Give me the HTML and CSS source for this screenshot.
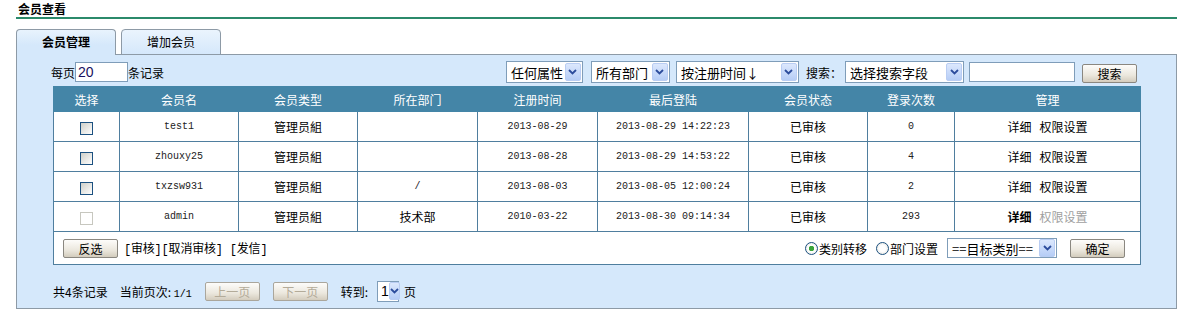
FILE: index.html
```html
<!DOCTYPE html>
<html lang="zh-CN">
<head>
  <meta charset="UTF-8">
  <title>会员查看</title>
  <link rel="stylesheet" href="styles.css">
</head>
<body>
  <div class="page">
    <div class="page-title">会员查看</div>

    <div class="tabs">
      <div class="tab tab-active">会员管理</div>
      <div class="tab">增加会员</div>
    </div>

    <div class="panel">
      <div class="toolbar">
        <div class="perpage">
          <span>每页</span><span class="textbox w-perpage">20</span><span>条记录</span>
        </div>
        <div class="filters">
          <div class="select w-attr"><span class="select-text">任何属性</span><span class="arrow"><svg width="9" height="6" viewBox="0 0 9 6"><path d="M1 1 L4.5 4.5 L8 1" fill="none" stroke="#2c4c9c" stroke-width="1.8"/></svg></span></div>
          <div class="select w-dept"><span class="select-text">所有部门</span><span class="arrow"><svg width="9" height="6" viewBox="0 0 9 6"><path d="M1 1 L4.5 4.5 L8 1" fill="none" stroke="#2c4c9c" stroke-width="1.8"/></svg></span></div>
          <div class="select w-order"><span class="select-text">按注册时间↓</span><span class="arrow"><svg width="9" height="6" viewBox="0 0 9 6"><path d="M1 1 L4.5 4.5 L8 1" fill="none" stroke="#2c4c9c" stroke-width="1.8"/></svg></span></div>
          <span class="label-search">搜索：</span>
          <div class="select w-field"><span class="select-text">选择搜索字段</span><span class="arrow"><svg width="9" height="6" viewBox="0 0 9 6"><path d="M1 1 L4.5 4.5 L8 1" fill="none" stroke="#2c4c9c" stroke-width="1.8"/></svg></span></div>
          <span class="textbox w-keyword"></span>
          <span class="btn w-btn">搜索</span>
        </div>
      </div>

      <table class="grid">
        <colgroup>
          <col style="width:66px"><col style="width:119px"><col style="width:119px"><col style="width:120px"><col style="width:120px"><col style="width:151px"><col style="width:119px"><col style="width:87px"><col>
        </colgroup>
        <thead>
          <tr>
            <th>选择</th><th>会员名</th><th>会员类型</th><th>所在部门</th><th>注册时间</th><th>最后登陆</th><th>会员状态</th><th>登录次数</th><th>管理</th>
          </tr>
        </thead>
        <tbody>
          <tr>
            <td><span class="check"></span></td>
            <td class="mono">test1</td>
            <td>管理员組</td>
            <td></td>
            <td class="mono">2013-08-29</td>
            <td class="mono">2013-08-29 14:22:23</td>
            <td>已审核</td>
            <td class="mono">0</td>
            <td><span class="link">详细</span><span class="link">权限设置</span></td>
          </tr>
          <tr>
            <td><span class="check"></span></td>
            <td class="mono">zhouxy25</td>
            <td>管理员組</td>
            <td></td>
            <td class="mono">2013-08-28</td>
            <td class="mono">2013-08-29 14:53:22</td>
            <td>已审核</td>
            <td class="mono">4</td>
            <td><span class="link">详细</span><span class="link">权限设置</span></td>
          </tr>
          <tr>
            <td><span class="check"></span></td>
            <td class="mono">txzsw931</td>
            <td>管理员組</td>
            <td class="mono">/</td>
            <td class="mono">2013-08-03</td>
            <td class="mono">2013-08-05 12:00:24</td>
            <td>已审核</td>
            <td class="mono">2</td>
            <td><span class="link">详细</span><span class="link">权限设置</span></td>
          </tr>
          <tr>
            <td><span class="check check-disabled"></span></td>
            <td class="mono">admin</td>
            <td>管理员組</td>
            <td>技术部</td>
            <td class="mono">2010-03-22</td>
            <td class="mono">2013-08-30 09:14:34</td>
            <td>已审核</td>
            <td class="mono">293</td>
            <td><span class="link link-strong">详细</span><span class="link link-disabled">权限设置</span></td>
          </tr>
          <tr class="actions-row">
            <td colspan="9">
              <div class="actions">
                <div class="actions-left">
                  <span class="btn w-btn">反选</span>
                  <span class="bulk">[审核][取消审核] [发信]</span>
                </div>
                <div class="actions-right">
                  <span class="radio radio-on"></span><span class="radio-label">类别转移</span>
                  <span class="radio"></span><span class="radio-label">部门设置</span>
                  <div class="select w-target"><span class="select-text">==目标类别==</span><span class="arrow"><svg width="9" height="6" viewBox="0 0 9 6"><path d="M1 1 L4.5 4.5 L8 1" fill="none" stroke="#2c4c9c" stroke-width="1.8"/></svg></span></div>
                  <span class="btn w-btn">确定</span>
                </div>
              </div>
            </td>
          </tr>
        </tbody>
      </table>

      <div class="pager">
        <span>共4条记录</span>
        <span class="pager-info">当前页次: <span class="mono-inline">1/1</span></span>
        <span class="btn btn-disabled w-btn">上一页</span>
        <span class="btn btn-disabled w-btn">下一页</span>
        <span>转到:</span>
        <div class="select w-page"><span class="select-text">1</span><span class="arrow"><svg width="9" height="6" viewBox="0 0 9 6"><path d="M1 1 L4.5 4.5 L8 1" fill="none" stroke="#2c4c9c" stroke-width="1.8"/></svg></span></div>
        <span>页</span>
      </div>
    </div>
  </div>
</body>
</html>
```

FILE: styles.css
```css
body {
  margin: 0;
  font-family: "Noto Sans CJK SC", "DejaVu Sans", sans-serif;
  font-size: 12px;
  color: #000;
  background: #fff;
}
.page {
  margin: 0 8px 0 16px;
}
.page-title {
  height: 17px;
  line-height: 17px;
  padding-left: 2px;
  font-weight: bold;
  border-bottom: 2px solid #2b8a6b;
}
.tabs {
  display: flex;
  gap: 5px;
  margin-top: 10px;
  height: 25px;
  position: relative;
  z-index: 1;
}
.tab {
  width: 98px;
  height: 24px;
  line-height: 24px;
  text-align: center;
  border: 1px solid #8d9aa6;
  border-radius: 4px 4px 0 0;
  background: linear-gradient(#eaf4fd, #d5e8fb);
}
.tab-active {
  font-weight: bold;
  height: 25px;
  border-bottom: none;
  background: linear-gradient(#e8f3fd, #d5e8fb 60%);
}
.panel {
  border: 1px solid #8d9aa6;
  background: #d5e8fb;
  padding: 5px 35px 7px 36px;
}
.toolbar {
  display: flex;
  justify-content: space-between;
  align-items: center;
  height: 24px;
  margin-left: -2px;
  padding-right: 4px;
}
.perpage {
  display: flex;
  align-items: center;
}
.filters {
  display: flex;
  align-items: center;
}
.textbox {
  display: inline-block;
  box-sizing: border-box;
  height: 20px;
  line-height: 18px;
  background: #fff;
  border: 1px solid #7f9db9;
  font-family: "Liberation Sans", sans-serif;
  font-size: 14px;
  color: #1a1060;
  padding-left: 2px;
}
.w-perpage { width: 53px; }
.w-keyword { width: 106px; margin-left: 5px; }
.select {
  display: flex;
  align-items: center;
  justify-content: space-between;
  box-sizing: border-box;
  height: 22px;
  background: #fff;
  border: 1px solid #7f9db9;
  padding: 1px;
  font-size: 13px;
}
.select-text {
  padding-left: 3px;
  white-space: nowrap;
}
.arrow {
  display: flex;
  align-items: center;
  justify-content: center;
  width: 16px;
  height: 18px;
  box-sizing: border-box;
  border: 1px solid #b9cdf3;
  border-radius: 2px;
  background: linear-gradient(#dce8fd, #b6cdf6);
}
.w-attr { width: 77px; }
.w-dept { width: 79px; margin-left: 8px; }
.w-order { width: 123px; margin-left: 6px; }
.w-field { width: 119px; }
.w-target { width: 110px; height: 20px; }
.w-page { width: 22px; height: 21px; padding-left: 0; }
.w-page .select-text { padding-left: 3px; font-family: "Liberation Sans", sans-serif; font-size: 14px; }
.label-search {
  margin: 0 3px 0 7px;
}
.btn {
  display: inline-block;
  box-sizing: border-box;
  height: 19px;
  line-height: 17px;
  text-align: center;
  border: 1px solid #8a8780;
  border-radius: 2px;
  background: linear-gradient(#fdfcfa, #ebe7dd 60%, #d3ccbd);
  font-size: 12px;
}
.w-btn { width: 55px; }
.filters .btn { margin-left: 7px; margin-top: 3px; }
.btn-disabled {
  color: #b3ab99;
  border-color: #aaa69c;
}
.grid {
  width: 1088px;
  margin-top: 2px;
  border-collapse: collapse;
  table-layout: fixed;
  background: #fff;
}
.grid th {
  height: 24px;
  background: #4485a7;
  color: #fff;
  font-weight: normal;
  border: 1px solid #4485a7;
  padding: 0;
}
.grid td {
  height: 29px;
  text-align: center;
  border: 1px solid #4f7e9e;
  padding: 0;
}
.mono {
  font-family: "Liberation Mono", monospace;
  font-size: 10px;
  color: #222;
}
.mono-inline {
  font-family: "Liberation Mono", monospace;
  font-size: 10px;
}
.check {
  display: inline-block;
  vertical-align: middle;
  width: 13px;
  height: 13px;
  box-sizing: border-box;
  border: 1px solid #1c5180;
  background: linear-gradient(135deg, #cfcfc8, #fff);
}
.check-disabled {
  border-color: #c7c7bf;
  background: #fff;
}
.link {
  margin: 0 4px;
}
.link-strong {
  font-weight: bold;
}
.link-disabled {
  color: #a0a0a0;
}
.grid .actions-row td {
  height: 32px;
  text-align: left;
}
.actions {
  display: flex;
  justify-content: space-between;
  align-items: center;
  padding: 0 15px 0 9px;
}
.actions-left, .actions-right {
  display: flex;
  align-items: center;
}
.bulk {
  margin-left: 6px;
  font-family: "Liberation Mono", "Noto Sans CJK SC", monospace;
  letter-spacing: -0.2px;
}
.radio {
  display: inline-block;
  width: 13px;
  height: 13px;
  box-sizing: border-box;
  border-radius: 50%;
  border: 1px solid #1c5180;
  background: radial-gradient(circle, #fff 40%, #dcdcd5);
  margin-right: 1px;
}
.radio-on {
  background: radial-gradient(circle, #3aa53a 0 2.5px, #fff 3px 45%, #dcdcd5);
}
.radio-label {
  margin-right: 9px;
}
.actions-right .btn { margin-left: 13px; }
.pager {
  display: flex;
  align-items: center;
  height: 20px;
  margin-top: 16px;
}
.pager-info { margin: 0 13px 0 12px; }
.pager .btn-disabled { margin-right: 13px; }
.pager .w-page { margin: 0 5px 0 9px; }
```
